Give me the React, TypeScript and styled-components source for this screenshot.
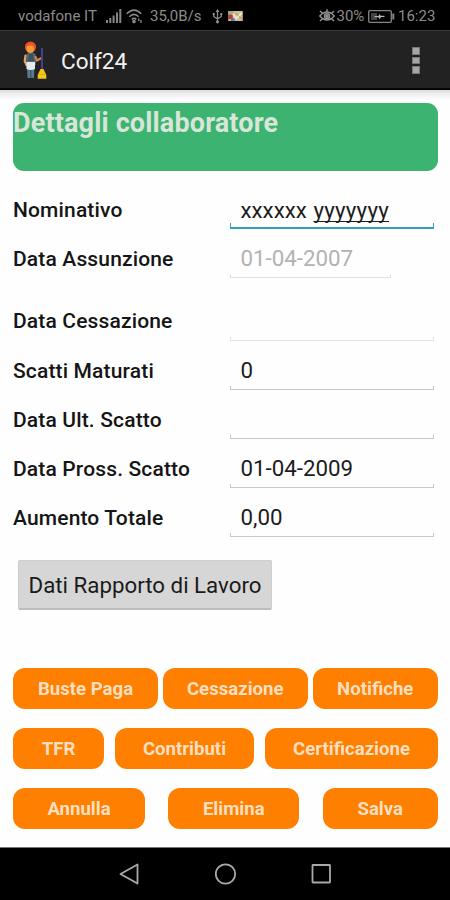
import React from "react";
import styled, { createGlobalStyle } from "styled-components";

const GlobalStyle = createGlobalStyle`
  * { box-sizing: border-box; }
  body { margin: 0; background: #fefefe; font-family: Roboto, sans-serif; }
`;

const Screen = styled.div`
  width: 450px;
  height: 900px;
  display: flex;
  flex-direction: column;
  overflow: hidden;
  background: #fefefe;
`;

const StatusBar = styled.header`
  height: 30px;
  flex: none;
  display: flex;
  align-items: center;
  padding: 2px 15px 0 18px;
  background: #000;
  color: #8c8c8c;
  svg { flex: none; display: block; }
`;

const StatusText = styled.span<{ $width: number; $left?: number }>`
  width: ${(p) => p.$width}px;
  font-size: 15px;
  line-height: 28px;
  white-space: nowrap;
  margin-left: ${(p) => p.$left ?? 0}px;
`;

const StatusIcon = styled.svg<{ $left: number }>`
  margin-left: ${(p) => p.$left}px;
`;

const Push = styled.div`
  flex: 1;
`;

const AppBar = styled.div`
  height: 60px;
  flex: none;
  display: flex;
  align-items: center;
  padding: 0 30px 0 21px;
  background: #222;
  border-top: 1px solid #3a3a3a;
  border-bottom: 2px solid #050505;
`;

const AppTitle = styled.h1`
  margin: 0 auto 0 12px;
  padding-top: 3px;
  font-size: 22.5px;
  font-weight: 400;
  color: #f2f2f2;
`;

const Overflow = styled.div`
  display: grid;
  gap: 2px;
  padding-top: 2px;
`;

const Dot = styled.i`
  width: 8px;
  height: 7.5px;
  border: 1px solid #777;
  background: #a6a6a6;
`;

const Content = styled.main`
  flex: 1;
  padding: 13px 12px 0 13px;
  background: linear-gradient(#dcdcdc 0, #f0eeee 4px, #fefefe 10px);
`;

const Banner = styled.h2`
  margin: 0;
  height: 68px;
  border-radius: 11px;
  background: #3cb371;
  color: #d8e6d9;
  font-size: 27px;
  font-weight: 700;
  line-height: 41px;
  letter-spacing: 0.15px;
`;

const Form = styled.div`
  padding-top: 9px;
`;

const Row = styled.div<{ $gap?: number }>`
  height: 49.2px;
  margin-top: ${(p) => p.$gap ?? 0}px;
  display: grid;
  grid-template-columns: 217px 1fr;
`;

const Label = styled.label`
  padding-top: 17px;
  font-size: 21px;
  font-weight: 500;
  line-height: 26px;
  letter-spacing: 0.15px;
  color: #151515;
  white-space: nowrap;
`;

type Tone = "focus" | "normal" | "faint";

const Field = styled.div<{ $short?: boolean; $muted?: boolean; $drop?: number }>`
  width: ${(p) => (p.$short ? 161 : 204)}px;
  display: flex;
  flex-direction: column;
  justify-content: space-between;
  padding-top: ${(p) => 16 + (p.$drop ?? 0)}px;
  color: ${(p) => (p.$muted ? "#b2b2b2" : "#1c1c1c")};
  font-size: 22.3px;
  line-height: 26px;
`;

const Value = styled.span`
  height: 26px;
  padding-left: 10.5px;
  white-space: pre;
`;

const Spell = styled.span`
  margin-left: 1px;
  letter-spacing: 0.25px;
  text-decoration: underline;
  text-decoration-thickness: 1px;
  text-decoration-skip-ink: none;
  text-underline-offset: 3px;
`;

const lineColor = { focus: "#319fbd", normal: "#c8c8c8", faint: "#e2e2e2" };

const Line = styled.div<{ $tone: Tone }>`
  height: ${(p) => (p.$tone === "focus" ? 6 : 4)}px;
  border: 1px solid ${(p) => lineColor[p.$tone]};
  border-top: 0;
  border-bottom-width: ${(p) => (p.$tone === "focus" ? 2 : 1)}px;
`;

const GreyButton = styled.button`
  display: block;
  margin: 23px 0 0 5px;
  padding: 0;
  width: 254px;
  height: 50px;
  border: 1px solid #cfcfcf;
  border-bottom: 2px solid #bdbdbd;
  border-radius: 2px;
  background: #d6d6d6;
  color: #1a1a1a;
  font: 400 22.3px/46px Roboto, sans-serif;
  white-space: nowrap;
`;

const Actions = styled.div`
  margin-top: 57.4px;
  display: grid;
  gap: 19px;
`;

const ActionRow = styled.div<{ $cols: string; $gap: number }>`
  display: grid;
  grid-template-columns: ${(p) => p.$cols};
  column-gap: ${(p) => p.$gap}px;
`;

const Action = styled.button`
  height: 41px;
  padding: 2px 0 0;
  border: 0;
  border-radius: 12px;
  background: #ff8000;
  color: #fbdfc0;
  font: 700 18.6px/39px Roboto, sans-serif;
  white-space: nowrap;
`;

const NavBar = styled.nav`
  height: 53px;
  flex: none;
  display: flex;
  justify-content: center;
  gap: 73px;
  padding-top: 14px;
  background: #000;
  border-top: 1px solid #777;
`;

const rows: { label: string; value?: string; spell?: string; tone: Tone; short?: boolean; gap?: number; drop?: number }[] = [
  { label: "Nominativo", value: "xxxxxx ", spell: "yyyyyyy", tone: "focus", drop: 1 },
  { label: "Data Assunzione", value: "01-04-2007", tone: "faint", short: true },
  { label: "Data Cessazione", tone: "faint", gap: 13 },
  { label: "Scatti Maturati", value: "0", tone: "normal" },
  { label: "Data Ult. Scatto", tone: "normal" },
  { label: "Data Pross. Scatto", value: "01-04-2009", tone: "normal" },
  { label: "Aumento Totale", value: "0,00", tone: "normal" },
];

const actions = [
  { cols: "145px 145.5px 125.5px", gap: 4.5, items: ["Buste Paga", "Cessazione", "Notifiche"] },
  { cols: "91px 139px 173px", gap: 11, items: ["TFR", "Contributi", "Certificazione"] },
  { cols: "132px 131px 115.5px", gap: 23.25, items: ["Annulla", "Elimina", "Salva"] },
];

const Housekeeper = () => (
  <svg width="28" height="40" viewBox="0 0 28 40">
    <path d="M5.5 14Q9.5 11 14.5 14L15 25H5Z" fill="#526778" />
    <path d="M4.5 15.5 3.7 21 5.5 25" fill="none" stroke="#e0a468" strokeWidth="2.2" strokeLinecap="round" />
    <path d="M14.5 17 16 20.5 19.5 18.5" fill="none" stroke="#c98c40" strokeWidth="2.2" strokeLinecap="round" />
    <path d="M8 14H12L13 21H7Z" fill="#3d505d" />
    <path d="M6 26H13.5L13 38H6.5Z" fill="#587a8d" />
    <path d="M9.8 30V38" stroke="#354e60" />
    <path d="M5.5 22H14V29Q10 31 5.5 29Z" fill="#e4ebef" />
    <circle cx="9.5" cy="7" r="5.6" fill="#e94f25" />
    <ellipse cx="9.3" cy="9" rx="3.8" ry="4" fill="#f29a3c" />
    <path d="M5 6Q9 1 14 6L11 5.8Z" fill="#f3612c" />
    <path d="M21 8V30" stroke="#46439b" strokeWidth="1.8" />
    <path d="M19.5 29H22.5L25.3 35V38.8H16.7V35Z" fill="#f5c61a" />
    <path d="M18 34.5H24" stroke="#dfa11a" strokeWidth=".8" />
  </svg>
);

export default function App() {
  return (
    <Screen>
      <GlobalStyle />
      <StatusBar>
        <StatusText $width={80}>vodafone IT</StatusText>
        <StatusIcon $left={8} width="16" height="14" viewBox="0 0 16 14" fill="#858585">
          <path d="M0 11h2v3H0zM3.3 9h2v5h-2zM6.6 6.5h2V14h-2zM10 3.5h2V14h-2zM13.3 0h2v14h-2z" />
        </StatusIcon>
        <StatusIcon $left={4} width="18" height="15" viewBox="0 0 18 15" fill="none" stroke="#8c8c8c" strokeWidth="1.6">
          <path d="M.8 4.8Q8-2.5 15.2 4.8M3.3 7.8Q8 3 12.7 7.8M5.8 10.4Q8 8.2 10.2 10.4" />
          <circle cx="8" cy="12.6" r="1" fill="#8c8c8c" />
          <path d="M12.8 9.5V12M15 11V14" strokeWidth="1.3" />
        </StatusIcon>
        <StatusText $left={6} $width={51}>35,0B/s</StatusText>
        <StatusIcon $left={11} width="11" height="15" viewBox="0 0 11 15" fill="none" stroke="#8c8c8c" strokeWidth="1.3">
          <path d="M5.5 2V12M1.7 5V7.5L5.5 10 9.3 7.5V5" />
          <path d="M5.5 0 7.5 3H3.5ZM.7 4H2.7V6H.7ZM8.3 4H10.3V6H8.3Z" fill="#8c8c8c" stroke="none" />
          <circle cx="5.5" cy="12.8" r="1.6" fill="#8c8c8c" stroke="none" />
        </StatusIcon>
        <StatusIcon $left={5} width="15" height="10" viewBox="0 0 16 11">
          <path d="M0 0H16V11H0Z" fill="#cdbf9a" />
          <path d="M0 0H6V4H0Z" fill="#a3ad75" />
          <path d="M0 4H5V9H0Z" fill="#bc3b37" />
          <path d="M3 8H7V11H3Z" fill="#527bb1" />
          <path d="M5 3 9 8 15 2" fill="none" stroke="#eee8cd" strokeWidth="2" />
          <path d="M8 2 11 5M12 6 16 10" fill="none" stroke="#a87a52" />
        </StatusIcon>
        <Push />
        <StatusIcon $left={0} width="16" height="14" viewBox="0 0 16 14" fill="none" stroke="#929292" strokeWidth="1.5">
          <path d="M.8 7Q8-1 15.2 7Q8 15 .8 7ZM1 2 3.3 4M8 .2V3M15 2 12.7 4M1 12 3.3 10M15 12 12.7 10" />
          <circle cx="8" cy="7.2" r="2.5" />
          <circle cx="8" cy="7.2" r="1" fill="#929292" />
        </StatusIcon>
        <StatusText $left={2} $width={27}>30%</StatusText>
        <StatusIcon $left={4} width="27" height="13" viewBox="0 0 27 13" fill="none" stroke="#858585" strokeWidth="1.3">
          <rect x=".7" y=".7" width="22.6" height="11.6" rx="1" />
          <path d="M3 3H9V10H3Z" fill="#444" stroke="none" />
          <path d="M6.5 6 10.5 6 11.5 3.8 12.5 5.8H16.5V7H13L11.7 9.4 10.5 7.2H6.5Z" fill="#b5b5b5" stroke="none" />
          <path d="M25.3 3.5V9.5" strokeWidth="2" />
        </StatusIcon>
        <StatusText $left={3.5} $width={37}>16:23</StatusText>
      </StatusBar>
      <AppBar>
        <Housekeeper />
        <AppTitle>Colf24</AppTitle>
        <Overflow><Dot /><Dot /><Dot /></Overflow>
      </AppBar>
      <Content>
        <Banner>Dettagli collaboratore</Banner>
        <Form>
          {rows.map((r) => (
            <Row key={r.label} $gap={r.gap}>
              <Label>{r.label}</Label>
              <Field $short={r.short} $muted={r.short} $drop={r.drop}>
                <Value>{r.value}{r.spell && <Spell>{r.spell}</Spell>}</Value>
                <Line $tone={r.tone} />
              </Field>
            </Row>
          ))}
        </Form>
        <GreyButton>Dati Rapporto di Lavoro</GreyButton>
        <Actions>
          {actions.map((a) => (
            <ActionRow key={a.items[0]} $cols={a.cols} $gap={a.gap}>
              {a.items.map((t) => <Action key={t}>{t}</Action>)}
            </ActionRow>
          ))}
        </Actions>
      </Content>
      <NavBar>
        <svg width="23" height="24" viewBox="0 0 23 24" fill="none" stroke="#a9a9a9" strokeWidth="1.8" strokeLinejoin="round">
          <path d="M19.5 2.5V21.5L2.5 12Z" />
        </svg>
        <svg width="23" height="24" viewBox="0 0 23 24" fill="none" stroke="#a9a9a9" strokeWidth="1.8">
          <circle cx="11.5" cy="12" r="9.7" />
        </svg>
        <svg width="23" height="24" viewBox="0 0 23 24" fill="none" stroke="#a9a9a9" strokeWidth="1.8">
          <rect x="2.5" y="3" width="17.5" height="17.5" rx=".5" />
        </svg>
      </NavBar>
    </Screen>
  );
}
